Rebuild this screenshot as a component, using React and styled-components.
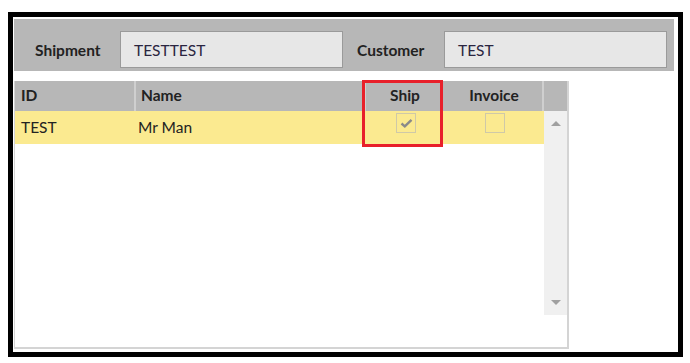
import React from 'react';
import styled, { createGlobalStyle } from 'styled-components';

const GlobalStyle = createGlobalStyle`
  html, body {
    margin: 0;
    padding: 0;
    background: #fff;
  }
  body {
    font-family: Lato, "Open Sans", sans-serif;
    color: #222;
  }
`;

const columns = [
  { key: 'id', label: 'ID', width: 121, align: 'left' },
  { key: 'name', label: 'Name', width: 230, align: 'left' },
  { key: 'ship', label: 'Ship', width: 80, align: 'center', noRule: true },
  { key: 'invoice', label: 'Invoice', width: 98, align: 'center' },
];

const rows = [{ id: 'TEST', name: 'Mr Man', ship: true, invoice: false }];

const App = () => {
  return (
    <>
      <GlobalStyle />
      <Frame>
        <FilterBar>
          <Label>Shipment</Label>
          <Field>TESTTEST</Field>
          <Label>Customer</Label>
          <Field>TEST</Field>
        </FilterBar>

        <Grid>
          <HeaderRow>
            {columns.map(col => (
              <HeadCell
                key={col.key}
                w={col.width}
                align={col.align}
                noRule={col.noRule}
              >
                {col.label}
              </HeadCell>
            ))}
            <ScrollHead />
          </HeaderRow>

          <Body>
            <Rows>
              {rows.map(row => (
                <Row key={row.id}>
                  <Cell w={121}>{row.id}</Cell>
                  <Cell w={230}>{row.name}</Cell>
                  <Cell w={80} align="center">
                    <CheckBox>
                      {row.ship && (
                        <svg width="13" height="10" viewBox="0 0 13 10">
                          <path
                            d="M1.5 5.5 L4.8 8.3 L11.5 1.8"
                            fill="none"
                            stroke="#8a8a8a"
                            strokeWidth="2.4"
                          />
                        </svg>
                      )}
                    </CheckBox>
                  </Cell>
                  <Cell w={98} align="center">
                    <CheckBox>{row.invoice && '✓'}</CheckBox>
                  </Cell>
                </Row>
              ))}
            </Rows>
            <ScrollTrack>
              <Arrow />
              <Arrow down />
            </ScrollTrack>
          </Body>

          <Highlight />
        </Grid>
      </Frame>
    </>
  );
};

export default App;

const Frame = styled.div`
  box-sizing: border-box;
  margin: 12px 0 0 8px;
  width: 675px;
  height: 345px;
  border: 5px solid #000;
  padding: 2px 4px 0 1px;
`;

const FilterBar = styled.div`
  box-sizing: border-box;
  display: flex;
  align-items: center;
  height: 52px;
  padding: 12px 7px 3px 21px;
  background: #b7b7b7;
`;

const Label = styled.div`
  font-size: 15.5px;
  font-weight: bold;
  color: #222;
  width: 85px;

  & ~ & {
    width: 87px;
    margin-left: 14px;
  }
`;

const Field = styled.div`
  box-sizing: border-box;
  display: flex;
  align-items: center;
  width: 223px;
  height: 37px;
  padding-left: 13px;
  background: #e7e7e7;
  border: 1px solid #9a9a9a;
  font-size: 15.5px;
  color: #2a2540;
`;

const Grid = styled.div`
  position: relative;
  box-sizing: border-box;
  margin-top: 10px;
  width: 555px;
  height: 268px;
  border: 2px solid #d4d4d4;
  border-top: none;
  border-left-width: 1px;
`;

const HeaderRow = styled.div`
  display: flex;
  height: 30px;
  background: #b7b7b7;
`;

const HeadCell = styled.div`
  box-sizing: border-box;
  width: ${p => p.w}px;
  display: flex;
  align-items: center;
  justify-content: ${p => (p.align === 'center' ? 'center' : 'flex-start')};
  padding-left: ${p => (p.align === 'center' ? 0 : 5)}px;
  padding-bottom: 2px;
  font-size: 15.5px;
  font-weight: bold;
  color: #222;
  border-right: 2px solid ${p => (p.noRule ? '#b7b7b7' : '#cfcfcf')};

  &:first-child {
    padding-left: 6px;
  }
`;

const ScrollHead = styled.div`
  flex: 1;
`;

const Body = styled.div`
  display: flex;
`;

const Rows = styled.div`
  width: 529px;
`;

const Row = styled.div`
  display: flex;
  height: 33px;
  background: #fbea90;
`;

const Cell = styled.div`
  box-sizing: border-box;
  width: ${p => p.w}px;
  display: flex;
  align-items: ${p => (p.align === 'center' ? 'flex-start' : 'center')};
  justify-content: ${p => (p.align === 'center' ? 'center' : 'flex-start')};
  padding: ${p => (p.align === 'center' ? '2px 0 0 0' : '0 0 2px 6px')};
  font-size: 15.5px;
  color: #222;

  &:nth-child(2) {
    padding-left: 2px;
  }
`;

const CheckBox = styled.div`
  box-sizing: border-box;
  width: 20px;
  height: 20px;
  border: 1px solid #cfc9a8;
  display: flex;
  align-items: center;
  justify-content: center;
`;

const ScrollTrack = styled.div`
  flex: 1;
  height: 204px;
  background: #f0f0f0;
  display: flex;
  flex-direction: column;
  justify-content: space-between;
  align-items: center;
  padding: 10px 0;
  box-sizing: border-box;
`;

const Arrow = styled.div`
  width: 0;
  height: 0;
  border-left: 5px solid transparent;
  border-right: 5px solid transparent;
  ${p =>
    p.down
      ? 'border-top: 5px solid #a0a0a0;'
      : 'border-bottom: 5px solid #a0a0a0;'}
`;

const Highlight = styled.div`
  position: absolute;
  left: 347px;
  top: -1px;
  width: 81px;
  height: 67px;
  box-sizing: border-box;
  border: 3px solid #e8202a;
`;
